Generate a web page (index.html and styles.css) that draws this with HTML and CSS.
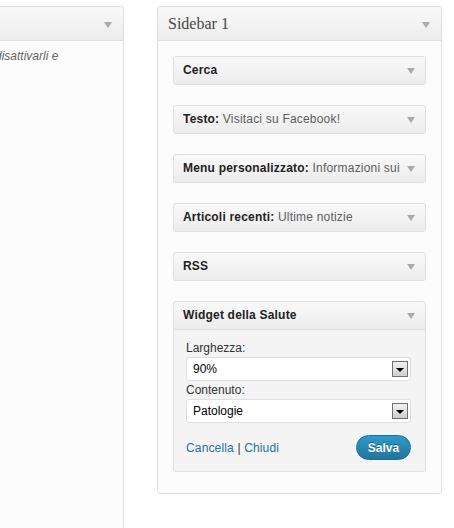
FILE: index.html
```html
<!DOCTYPE html>
<html lang="it">
<head>
<meta charset="utf-8">
<title>Widget</title>
<link rel="stylesheet" href="styles.css">
</head>
<body>
<div class="page">
  <section class="holder holder-left">
    <div class="holder-head"><span class="arrow"></span></div>
    <div class="holder-body">
      <p class="desc">disattivarli e</p>
    </div>
  </section>

  <section class="holder holder-right">
    <div class="holder-head">
      <h3 class="holder-title">Sidebar 1</h3>
      <span class="arrow"></span>
    </div>
    <div class="holder-body widgets">
      <div class="widget">
        <div class="widget-top"><h4 class="widget-title">Cerca</h4><span class="arrow"></span></div>
      </div>
      <div class="widget">
        <div class="widget-top"><h4 class="widget-title">Testo: <span class="in-title">Visitaci su Facebook!</span></h4><span class="arrow"></span></div>
      </div>
      <div class="widget">
        <div class="widget-top"><h4 class="widget-title">Menu personalizzato: <span class="in-title">Informazioni sui disturbi</span></h4><span class="arrow"></span></div>
      </div>
      <div class="widget">
        <div class="widget-top"><h4 class="widget-title">Articoli recenti: <span class="in-title">Ultime notizie</span></h4><span class="arrow"></span></div>
      </div>
      <div class="widget">
        <div class="widget-top"><h4 class="widget-title">RSS</h4><span class="arrow"></span></div>
      </div>
      <div class="widget widget-open">
        <div class="widget-top"><h4 class="widget-title">Widget della Salute</h4><span class="arrow"></span></div>
        <div class="widget-inside">
          <label class="field-label">Larghezza:</label>
          <div class="fake-select"><span class="sel-value">90%</span><span class="sel-btn"><span class="sel-tri"></span></span></div>
          <label class="field-label">Contenuto:</label>
          <div class="fake-select"><span class="sel-value">Patologie</span><span class="sel-btn"><span class="sel-tri"></span></span></div>
          <div class="widget-actions">
            <div class="links"><a class="link" href="#">Cancella</a> | <a class="link" href="#">Chiudi</a></div>
            <button class="btn-save" type="button">Salva</button>
          </div>
        </div>
      </div>
    </div>
  </section>
</div>
</body>
</html>
```

FILE: styles.css
```css
html, body {
  margin: 0;
  padding: 0;
  background: #ffffff;
  overflow: hidden;
}

body {
  font-family: "Liberation Sans", Arial, sans-serif;
  font-size: 12px;
  color: #333333;
}

.page {
  display: flex;
  align-items: flex-start;
  min-height: 100vh;
  box-sizing: border-box;
  padding-top: 6px;
}

.holder {
  box-sizing: border-box;
  border: 1px solid #dfdfdf;
  border-radius: 3px;
  background: #fcfcfc;
}

.holder-left {
  width: 134px;
  margin-left: -10px;
  align-self: stretch;
  border-bottom: 0;
  overflow: hidden;
}

.holder-right {
  width: 285px;
  margin-left: 33px;
}

.holder-head {
  height: 33px;
  display: flex;
  align-items: center;
  padding: 0 11px 0 10px;
  border-bottom: 1px solid #dfdfdf;
  background: linear-gradient(to bottom, #f9f9f9, #ececec);
  border-radius: 3px 3px 0 0;
}

.holder-title {
  flex: 1;
  margin: 0;
  font-family: "Liberation Serif", "Times New Roman", serif;
  font-weight: normal;
  font-size: 16px;
  line-height: 33px;
  color: #464646;
}

.holder-left .holder-head {
  justify-content: flex-end;
}

.arrow {
  flex: none;
  width: 0;
  height: 0;
  border-left: 4px solid transparent;
  border-right: 4px solid transparent;
  border-top: 6px solid #a9a9a9;
}

.holder-head .arrow {
  margin-top: 2px;
}

.desc {
  margin: 8px 0 0 4px;
  font-style: italic;
  font-size: 12px;
  line-height: 15px;
  color: #666666;
  white-space: nowrap;
}

.widgets {
  display: flex;
  flex-direction: column;
  gap: 20px;
  padding: 15px 15px 21px 15px;
}

.widget {
  border: 1px solid #dfdfdf;
  border-radius: 3px;
  background: #f4f4f4;
}

.widget-top {
  height: 27px;
  display: flex;
  align-items: center;
  padding: 0 10px 0 9px;
  background: linear-gradient(to bottom, #f9f9f9, #ececec);
  border-radius: 3px;
}

.widget-open .widget-top {
  border-bottom: 1px solid #dfdfdf;
  border-radius: 3px 3px 0 0;
}

.widget-title {
  flex: 1;
  min-width: 0;
  margin: 0 5px 0 0;
  font-size: 12px;
  line-height: 27px;
  font-weight: bold;
  letter-spacing: 0.2px;
  color: #222222;
  white-space: nowrap;
  overflow: hidden;
}

.in-title {
  font-weight: normal;
  color: #5c5c5c;
}

.widget-inside {
  padding: 11px 14px 11px 12px;
}

.field-label {
  display: block;
  font-size: 12px;
  line-height: 15px;
  color: #333333;
}

.fake-select {
  box-sizing: border-box;
  height: 24px;
  margin: 1px 0 2px;
  display: flex;
  align-items: center;
  justify-content: space-between;
  padding: 0 2px 0 6px;
  background: #ffffff;
  border: 1px solid #dfdfdf;
  border-radius: 3px;
}

.sel-value {
  font-size: 12px;
  color: #000000;
}

.sel-btn {
  box-sizing: border-box;
  width: 16px;
  height: 16px;
  display: flex;
  align-items: center;
  justify-content: center;
  border: 1px solid #707070;
  background: linear-gradient(to bottom, #f2f2f2, #cfcfcf);
}

.sel-tri {
  width: 0;
  height: 0;
  border-left: 4px solid transparent;
  border-right: 4px solid transparent;
  border-top: 4px solid #000000;
  margin-top: 1px;
}

.widget-actions {
  margin-top: 12px;
  display: flex;
  align-items: center;
  justify-content: space-between;
}

.links {
  font-size: 12px;
  letter-spacing: 0.15px;
  color: #333333;
}

.link {
  color: #21759b;
  text-decoration: none;
}

.btn-save {
  box-sizing: border-box;
  width: 55px;
  height: 25px;
  padding: 0;
  border: 1px solid #1f6f93;
  border-radius: 13px;
  background: linear-gradient(to bottom, #2e9bcc, #21759b);
  color: #ffffff;
  font-family: "Liberation Sans", Arial, sans-serif;
  font-weight: bold;
  font-size: 12px;
  text-shadow: 0 -1px 0 rgba(0, 0, 0, 0.35);
  cursor: pointer;
}
```
